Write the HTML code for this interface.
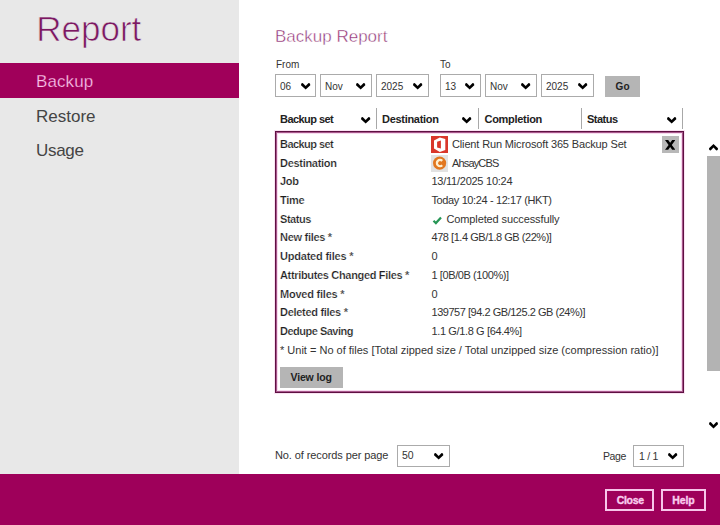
<!DOCTYPE html>
<html><head><meta charset="utf-8">
<style>
*{margin:0;padding:0;box-sizing:border-box}
html,body{width:720px;height:525px;overflow:hidden;background:#fff;font-family:"Liberation Sans",sans-serif}
.a{position:absolute}
.t{position:absolute;white-space:nowrap;line-height:1}
.sel{position:absolute;border:1px solid #ababab;background:#fff}
.sep{position:absolute;top:108px;width:1px;height:21px;background:#a8a8a8}
.btn{position:absolute;background:#b5b5b5}
</style></head><body>
<div class="a" style="left:0;top:0;width:239px;height:474px;background:#e8e8e8"></div>
<div class="t" style="left:36.3px;top:10.87px;font-size:35px;color:#7c1862;-webkit-text-stroke:0.7px #e8e8e8">Report</div>
<div class="a" style="left:0;top:63px;width:239px;height:35px;background:#a0005a"></div>
<div class="t" style="left:36px;top:72.81px;font-size:17px;color:#fbc3ea;letter-spacing:0.1px;-webkit-text-stroke:0.25px #a0005a">Backup</div>
<div class="t" style="left:36px;top:107.81px;font-size:17px;color:#444">Restore</div>
<div class="t" style="left:36px;top:141.81px;font-size:17px;color:#444;letter-spacing:-0.3px">Usage</div>
<div class="t" style="left:275px;top:27.61px;font-size:17px;color:#8e2c70;-webkit-text-stroke:0.45px #fff">Backup Report</div>
<div class="t" style="left:276px;top:59.83px;font-size:10px;color:#333">From</div>
<div class="t" style="left:440px;top:59.83px;font-size:10px;color:#333">To</div>
<div class="sel" style="left:275px;top:74px;width:41.4px;height:23px"></div>
<div class="t" style="left:280px;top:81.63px;font-size:10px;color:#333">06</div>
<svg class="a" style="left:300.7px;top:83.3px;overflow:visible" width="9.3" height="6.5" viewBox="0 0 9.3 6.5"><polygon points="0.3,0.4 1.7,0 4.65,3.1 7.60,0 9.00,0.4 9.30,2.3 4.65,6.50 0,2.3" fill="#000"/></svg>
<div class="sel" style="left:320px;top:74px;width:52px;height:23px"></div>
<div class="t" style="left:325px;top:81.63px;font-size:10px;color:#333">Nov</div>
<svg class="a" style="left:356.3px;top:83.3px;overflow:visible" width="9.3" height="6.5" viewBox="0 0 9.3 6.5"><polygon points="0.3,0.4 1.7,0 4.65,3.1 7.60,0 9.00,0.4 9.30,2.3 4.65,6.50 0,2.3" fill="#000"/></svg>
<div class="sel" style="left:376px;top:74px;width:53px;height:23px"></div>
<div class="t" style="left:381px;top:81.63px;font-size:10px;color:#333">2025</div>
<svg class="a" style="left:413.3px;top:83.3px;overflow:visible" width="9.3" height="6.5" viewBox="0 0 9.3 6.5"><polygon points="0.3,0.4 1.7,0 4.65,3.1 7.60,0 9.00,0.4 9.30,2.3 4.65,6.50 0,2.3" fill="#000"/></svg>
<div class="sel" style="left:440px;top:74px;width:41px;height:23px"></div>
<div class="t" style="left:445px;top:81.63px;font-size:10px;color:#333">13</div>
<svg class="a" style="left:465.3px;top:83.3px;overflow:visible" width="9.3" height="6.5" viewBox="0 0 9.3 6.5"><polygon points="0.3,0.4 1.7,0 4.65,3.1 7.60,0 9.00,0.4 9.30,2.3 4.65,6.50 0,2.3" fill="#000"/></svg>
<div class="sel" style="left:485px;top:74px;width:52px;height:23px"></div>
<div class="t" style="left:490px;top:81.63px;font-size:10px;color:#333">Nov</div>
<svg class="a" style="left:521.3px;top:83.3px;overflow:visible" width="9.3" height="6.5" viewBox="0 0 9.3 6.5"><polygon points="0.3,0.4 1.7,0 4.65,3.1 7.60,0 9.00,0.4 9.30,2.3 4.65,6.50 0,2.3" fill="#000"/></svg>
<div class="sel" style="left:541px;top:74px;width:53px;height:23px"></div>
<div class="t" style="left:546px;top:81.63px;font-size:10px;color:#333">2025</div>
<svg class="a" style="left:578.3px;top:83.3px;overflow:visible" width="9.3" height="6.5" viewBox="0 0 9.3 6.5"><polygon points="0.3,0.4 1.7,0 4.65,3.1 7.60,0 9.00,0.4 9.30,2.3 4.65,6.50 0,2.3" fill="#000"/></svg>
<div class="btn" style="left:605px;top:76px;width:35px;height:21px"></div>
<div class="t" style="left:615.6px;top:81.73px;font-size:10px;color:#222;font-weight:700;letter-spacing:0.2px">Go</div>
<div class="sep" style="left:376px"></div>
<div class="sep" style="left:478px"></div>
<div class="sep" style="left:581px"></div>
<div class="sep" style="left:682px"></div>
<div class="t" style="left:280px;top:114.49px;font-size:11px;color:#222;font-weight:700;letter-spacing:-0.55px">Backup set</div>
<svg class="a" style="left:361px;top:117px;overflow:visible" width="9.3" height="6.5" viewBox="0 0 9.3 6.5"><polygon points="0.3,0.4 1.7,0 4.65,3.1 7.60,0 9.00,0.4 9.30,2.3 4.65,6.50 0,2.3" fill="#000"/></svg>
<div class="t" style="left:382px;top:114.49px;font-size:11px;color:#222;font-weight:700;letter-spacing:-0.3px">Destination</div>
<svg class="a" style="left:462px;top:117px;overflow:visible" width="9.3" height="6.5" viewBox="0 0 9.3 6.5"><polygon points="0.3,0.4 1.7,0 4.65,3.1 7.60,0 9.00,0.4 9.30,2.3 4.65,6.50 0,2.3" fill="#000"/></svg>
<div class="t" style="left:484.5px;top:114.49px;font-size:11px;color:#222;font-weight:700;letter-spacing:-0.3px">Completion</div>
<div class="t" style="left:587px;top:114.49px;font-size:11px;color:#222;font-weight:700;letter-spacing:-0.5px">Status</div>
<svg class="a" style="left:667px;top:117px;overflow:visible" width="9.3" height="6.5" viewBox="0 0 9.3 6.5"><polygon points="0.3,0.4 1.7,0 4.65,3.1 7.60,0 9.00,0.4 9.30,2.3 4.65,6.50 0,2.3" fill="#000"/></svg>
<div class="a" style="left:275px;top:131px;width:409px;height:262px;border:1px solid #5e1042;box-shadow:0 0 0 1px #fae3f3,inset 0 0 0 1px #a9588d,inset 0 0 0 2px #f7dcef"></div>
<div class="btn" style="left:662px;top:136px;width:17px;height:17px;background:#b8b8b8"></div>
<svg class="a" style="left:665px;top:140px" width="10.4" height="9.8" viewBox="0 0 10.4 9.8"><polygon points="0,0 3.2,0 5.2,2.72 7.2,0 10.4,0 6.8,4.9 10.4,9.8 7.2,9.8 5.2,7.08 3.2,9.8 0,9.8 3.6,4.9" fill="#000"/></svg>
<div class="t" style="left:280px;top:139.09px;font-size:11px;color:#1e1e1e;font-weight:700;letter-spacing:-0.55px;-webkit-text-stroke:0.2px #fff">Backup set</div>
<div class="t" style="left:452px;top:139.09px;font-size:11px;color:#333;letter-spacing:-0.15px">Client Run Microsoft 365 Backup Set</div>
<div class="t" style="left:280px;top:157.77px;font-size:11px;color:#1e1e1e;font-weight:700;letter-spacing:-0.3px;-webkit-text-stroke:0.2px #fff">Destination</div>
<div class="t" style="left:452px;top:157.77px;font-size:11px;color:#333;letter-spacing:-0.85px">AhsayCBS</div>
<div class="t" style="left:280px;top:176.45px;font-size:11px;color:#1e1e1e;font-weight:700;letter-spacing:-0.3px;-webkit-text-stroke:0.2px #fff">Job</div>
<div class="t" style="left:431.5px;top:176.45px;font-size:11px;color:#333;letter-spacing:-0.25px">13/11/2025 10:24</div>
<div class="t" style="left:280px;top:195.13px;font-size:11px;color:#1e1e1e;font-weight:700;letter-spacing:-0.3px;-webkit-text-stroke:0.2px #fff">Time</div>
<div class="t" style="left:431.5px;top:195.13px;font-size:11px;color:#333;letter-spacing:-0.38px">Today 10:24 - 12:17 (HKT)</div>
<div class="t" style="left:280px;top:213.81px;font-size:11px;color:#1e1e1e;font-weight:700;letter-spacing:-0.46px;-webkit-text-stroke:0.2px #fff">Status</div>
<div class="t" style="left:446.5px;top:213.81px;font-size:11px;color:#333;letter-spacing:-0.12px">Completed successfully</div>
<div class="t" style="left:280px;top:232.49px;font-size:11px;color:#1e1e1e;font-weight:700;letter-spacing:-0.29px;-webkit-text-stroke:0.2px #fff">New files *</div>
<div class="t" style="left:431.5px;top:232.49px;font-size:11px;color:#333;letter-spacing:-0.46px">478 [1.4 GB/1.8 GB (22%)]</div>
<div class="t" style="left:280px;top:251.17px;font-size:11px;color:#1e1e1e;font-weight:700;letter-spacing:-0.21px;-webkit-text-stroke:0.2px #fff">Updated files *</div>
<div class="t" style="left:431.5px;top:251.17px;font-size:11px;color:#333">0</div>
<div class="t" style="left:280px;top:269.85px;font-size:11px;color:#1e1e1e;font-weight:700;letter-spacing:-0.33px;-webkit-text-stroke:0.2px #fff">Attributes Changed Files *</div>
<div class="t" style="left:431.5px;top:269.85px;font-size:11px;color:#333;letter-spacing:-0.41px">1 [0B/0B (100%)]</div>
<div class="t" style="left:280px;top:288.53px;font-size:11px;color:#1e1e1e;font-weight:700;letter-spacing:-0.22px;-webkit-text-stroke:0.2px #fff">Moved files *</div>
<div class="t" style="left:431.5px;top:288.53px;font-size:11px;color:#333">0</div>
<div class="t" style="left:280px;top:307.21px;font-size:11px;color:#1e1e1e;font-weight:700;letter-spacing:-0.3px;-webkit-text-stroke:0.2px #fff">Deleted files *</div>
<div class="t" style="left:431.5px;top:307.21px;font-size:11px;color:#333;letter-spacing:-0.47px">139757 [94.2 GB/125.2 GB (24%)]</div>
<div class="t" style="left:280px;top:325.89px;font-size:11px;color:#1e1e1e;font-weight:700;letter-spacing:-0.5px;-webkit-text-stroke:0.2px #fff">Dedupe Saving</div>
<div class="t" style="left:431.5px;top:325.89px;font-size:11px;color:#333;letter-spacing:-0.37px">1.1 G/1.8 G [64.4%]</div>
<div class="t" style="left:280px;top:344.57px;font-size:11px;color:#333">* Unit = No of files [Total zipped size / Total unzipped size (compression ratio)]</div>
<div class="a" style="left:431px;top:136px;width:17px;height:17px;background:#d9372b"></div>
<svg class="a" style="left:431px;top:136px" width="17" height="17" viewBox="0 0 17 17"><path d="M3 4.6 L8.8 1.5 L14.3 3.1 L14.3 13.9 L8.8 15.9 L3 12.6 Z M6.1 5.8 L9.9 4.5 L9.9 12.4 L6.1 11.6 Z" fill="#fff" fill-rule="evenodd"/></svg>
<div class="a" style="left:431px;top:155px;width:17px;height:17px;background:#e2e2e2"></div>
<svg class="a" style="left:431px;top:155px" width="17" height="17" viewBox="0 0 17 17"><circle cx="8.6" cy="8.1" r="6.6" fill="#e2771f"/><path d="M11.2 5.9 A3.1 3.1 0 1 0 11.2 10.3" stroke="#fff0d0" stroke-width="2.3" fill="none"/></svg>
<svg class="a" style="left:432px;top:215.5px" width="10" height="9" viewBox="0 0 10 9"><path d="M1.5 4.7 L3.9 7.1 L9 1.6" stroke="#279656" stroke-width="2.2" fill="none"/></svg>
<div class="btn" style="left:280px;top:367px;width:63px;height:21px;background:#b5b5b5"></div>
<div class="t" style="left:290.5px;top:372.11px;font-size:10.5px;color:#222;font-weight:700;letter-spacing:-0.15px">View log</div>
<svg class="a" style="left:709px;top:143.7px;overflow:visible" width="9" height="6.5" viewBox="0 0 9 6.5"><polygon points="0.3,6.10 1.7,6.50 4.50,3.40 7.30,6.50 8.70,6.10 9.00,4.20 4.50,0 0,4.20" fill="#000"/></svg>
<div class="a" style="left:707px;top:155.5px;width:13px;height:215px;background:#b3b3b3"></div>
<svg class="a" style="left:709px;top:422px;overflow:visible" width="9" height="6.5" viewBox="0 0 9 6.5"><polygon points="0.3,0.4 1.7,0 4.50,3.1 7.30,0 8.70,0.4 9.00,2.3 4.50,6.50 0,2.3" fill="#000"/></svg>
<div class="t" style="left:275px;top:449.99px;font-size:11px;color:#333;letter-spacing:-0.1px">No. of records per page</div>
<div class="sel" style="left:397px;top:445px;width:53px;height:22px"></div>
<div class="t" style="left:402px;top:450.41px;font-size:10.5px;color:#333">50</div>
<svg class="a" style="left:433.8px;top:453px;overflow:visible" width="9.3" height="6.5" viewBox="0 0 9.3 6.5"><polygon points="0.3,0.4 1.7,0 4.65,3.1 7.60,0 9.00,0.4 9.30,2.3 4.65,6.50 0,2.3" fill="#000"/></svg>
<div class="t" style="left:603px;top:450.71px;font-size:10.5px;color:#333;letter-spacing:-0.4px">Page</div>
<div class="sel" style="left:633px;top:444.5px;width:51px;height:22.5px"></div>
<div class="t" style="left:639px;top:450.71px;font-size:10.5px;color:#333;letter-spacing:-0.3px">1 / 1</div>
<svg class="a" style="left:668px;top:453px;overflow:visible" width="9.3" height="6.5" viewBox="0 0 9.3 6.5"><polygon points="0.3,0.4 1.7,0 4.65,3.1 7.60,0 9.00,0.4 9.30,2.3 4.65,6.50 0,2.3" fill="#000"/></svg>
<div class="a" style="left:0;top:474px;width:720px;height:51px;background:#9e005a"></div>
<div class="a" style="left:605px;top:489px;width:49px;height:22px;border:2px solid #f7c6ea"></div>
<div class="a" style="left:661px;top:489px;width:45px;height:22px;border:2px solid #f7c6ea"></div>
<div class="t" style="left:616.8px;top:495.11px;font-size:10.5px;color:#f9cdee;font-weight:700;letter-spacing:-0.35px;-webkit-text-stroke:0.35px #f9cdee">Close</div>
<div class="t" style="left:672.3px;top:495.11px;font-size:10.5px;color:#f9cdee;font-weight:700;letter-spacing:-0.15px;-webkit-text-stroke:0.35px #f9cdee">Help</div>
</body></html>
